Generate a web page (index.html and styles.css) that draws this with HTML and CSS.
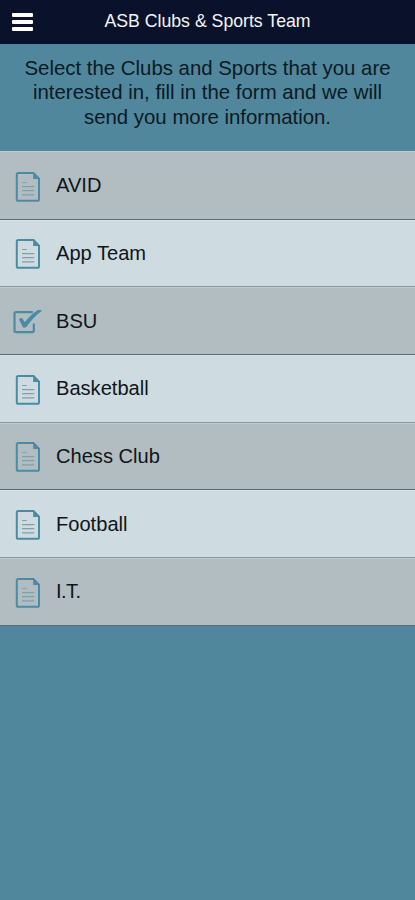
FILE: index.html
```html
<!DOCTYPE html>
<html lang="en">
<head>
<meta charset="utf-8">
<title>ASB Clubs &amp; Sports Team</title>
<link rel="stylesheet" href="styles.css">
</head>
<body>
<svg class="defs" aria-hidden="true">
  <symbol id="doc" viewBox="0 0 30 32">
    <path d="M5.2 1.9H20.5L26 7.7V28.2Q26 29.8 24.4 29.8H5.2Q3.8 29.8 3.8 28.2V3.5Q3.8 1.9 5.2 1.9Z" fill="none" stroke="#4b8ba4" stroke-width="2"/>
    <path d="M20.2 1.2V7.9H26.8Z" fill="#4b8ba4"/>
    <path d="M9 11.5H13.8M9 15.6H21.3M9 19.7H21.3M9 23.8H21.3" stroke="#7f9fab" stroke-width="1.2" fill="none"/>
  </symbol>
  <symbol id="check" viewBox="0 0 30 32">
    <path d="M19.8 6.2H3Q1.5 6.2 1.5 7.7V24.6Q1.5 26.1 3 26.1H19.3Q20.8 26.1 20.8 24.6V17.5" fill="none" stroke="#4b8ba4" stroke-width="2.2"/>
    <path d="M5.8 13L9 11.8L11.8 16.2Q18 7.8 25.5 3.7L29.3 4.4Q20 11 13 21.6H10Z" fill="#4b8ba4"/>
  </symbol>
</svg>
<header class="bar">
  <button class="menu" aria-label="Menu"><span></span><span></span><span></span></button>
  <h1>ASB Clubs &amp; Sports Team</h1>
</header>
<p class="intro">Select the Clubs and Sports that you are<br>interested in, fill in the form and we will<br>send you more information.</p>
<ul class="clubs">
  <li><svg><use href="#doc"/></svg><span>AVID</span></li>
  <li><svg><use href="#doc"/></svg><span>App Team</span></li>
  <li><svg><use href="#check"/></svg><span>BSU</span></li>
  <li><svg><use href="#doc"/></svg><span>Basketball</span></li>
  <li><svg><use href="#doc"/></svg><span>Chess Club</span></li>
  <li><svg><use href="#doc"/></svg><span>Football</span></li>
  <li><svg><use href="#doc"/></svg><span class="tight">I.T.</span></li>
</ul>
</body>
</html>
```
FILE: styles.css
```css
* { box-sizing: border-box; }
body {
  margin: 0;
  min-height: 100vh;
  background: #50879d;
  color: #0b1a22;
  font-family: "Liberation Sans", Arial, sans-serif;
}
.defs { display: none; }
.bar {
  display: grid;
  grid-template-columns: 44px 1fr 44px;
  align-items: center;
  height: 44px;
  background: #0a122b;
}
.menu {
  display: flex;
  flex-direction: column;
  gap: 3px;
  width: 21px;
  margin-left: 11.5px;
  padding: 0;
  border: 0;
  background: none;
}
.menu span { height: 4px; border-radius: 1px; background: #fff; }
h1 {
  margin: 0;
  color: #f4f5f7;
  font-size: 17.7px;
  font-weight: 400;
  line-height: 42px;
  text-align: center;
  height: 44px;
  white-space: nowrap;
}
.intro {
  height: 107px;
  margin: 0;
  padding-top: 12px;
  font-size: 20.4px;
  line-height: 24.4px;
  text-align: center;
  white-space: nowrap;
}
.clubs { margin: 0; padding: 0; list-style: none; }
.clubs li {
  display: flex;
  align-items: center;
  gap: 13px;
  height: 67.7px;
  padding-left: 13px;
  border-top: 1px solid #bdcbd0;
  border-bottom: 1px solid #596b76;
  background: #b2bdc2;
  color: #101518;
  font-size: 20.1px;
}
.clubs li:first-child { height: 68.6px; padding-top: 1px; }
.clubs li:nth-child(even) {
  border-top-color: #d5e2e6;
  border-bottom-color: #8b999e;
  background: #cedbe0;
}
.clubs svg { width: 30px; height: 32px; margin-top: 1.6px; flex: none; }
.clubs .tight { letter-spacing: -0.6px; }
```
